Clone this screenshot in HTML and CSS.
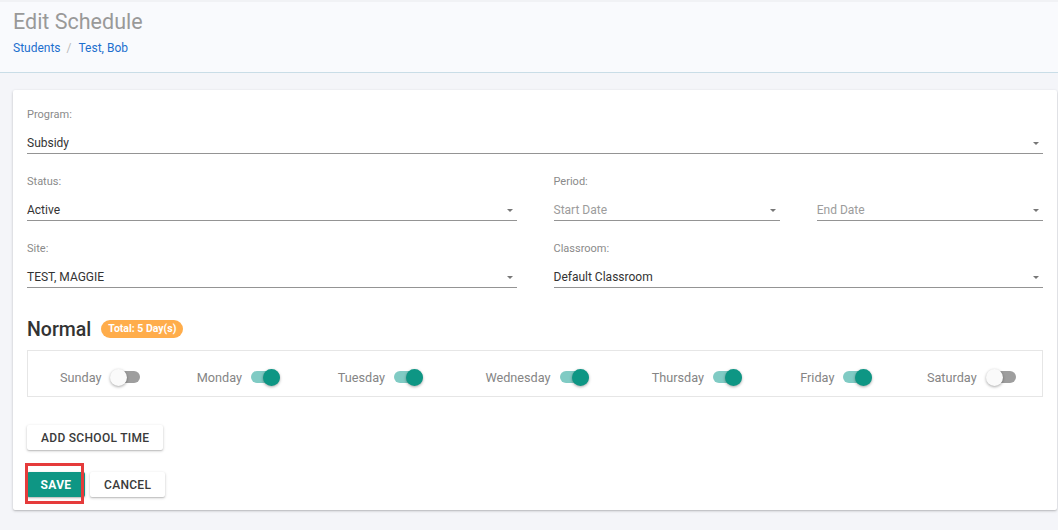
FILE: index.html
```html
<!DOCTYPE html>
<html>
<head>
<meta charset="utf-8">
<link rel="stylesheet" href="styles.css">
</head>
<body>
<header class="header">
  <h1 class="title">Edit Schedule</h1>
  <nav class="crumbs"><a class="crumb">Students</a><span class="sep">/</span><a class="crumb">Test, Bob</a></nav>
</header>
<main class="main">
  <section class="card">
    <div class="field">
      <div class="label">Program:</div>
      <div class="select"><span class="value">Subsidy</span><span class="caret"></span></div>
    </div>
    <div class="row">
      <div class="field">
        <div class="label">Status:</div>
        <div class="select"><span class="value">Active</span><span class="caret"></span></div>
      </div>
      <div class="field">
        <div class="label">Period:</div>
        <div class="row">
          <div class="select"><span class="value ph">Start Date</span><span class="caret"></span></div>
          <div class="select"><span class="value ph">End Date</span><span class="caret"></span></div>
        </div>
      </div>
    </div>
    <div class="row">
      <div class="field">
        <div class="label">Site:</div>
        <div class="select"><span class="value">TEST, MAGGIE</span><span class="caret"></span></div>
      </div>
      <div class="field">
        <div class="label">Classroom:</div>
        <div class="select"><span class="value">Default Classroom</span><span class="caret"></span></div>
      </div>
    </div>
    <div class="heading"><h2 class="h2">Normal</h2><span class="badge">Total: 5 Day(s)</span></div>
    <div class="days">
      <div class="day"><span class="dname">Sunday</span><span class="switch"><span class="track"></span><span class="thumb"></span></span></div>
      <div class="day"><span class="dname">Monday</span><span class="switch on"><span class="track"></span><span class="thumb"></span></span></div>
      <div class="day"><span class="dname">Tuesday</span><span class="switch on"><span class="track"></span><span class="thumb"></span></span></div>
      <div class="day"><span class="dname">Wednesday</span><span class="switch on"><span class="track"></span><span class="thumb"></span></span></div>
      <div class="day"><span class="dname">Thursday</span><span class="switch on"><span class="track"></span><span class="thumb"></span></span></div>
      <div class="day"><span class="dname">Friday</span><span class="switch on"><span class="track"></span><span class="thumb"></span></span></div>
      <div class="day"><span class="dname">Saturday</span><span class="switch"><span class="track"></span><span class="thumb"></span></span></div>
    </div>
    <div class="btnrow first"><button class="btn">Add School Time</button></div>
    <div class="btnrow actions">
      <span class="savewrap"><button class="btn primary">Save</button><span class="highlight"></span></span>
      <button class="btn">Cancel</button>
    </div>
  </section>
</main>
</body>
</html>
```
FILE: styles.css
```css
* { box-sizing: border-box; }
html, body { margin: 0; }
body {
  font-family: Roboto, "Liberation Sans", Arial, sans-serif;
  background: #f4f5f9;
  width: 1058px;
  height: 530px;
  overflow: hidden;
}
.header {
  background: #f9fafd;
  border-top: 2px solid #f1f2f5;
  border-bottom: 1px solid #c9dde7;
  height: 73px;
  padding: 7px 13px 0;
}
.title {
  margin: 0;
  font-size: 21.5px;
  font-weight: 400;
  color: #999;
  line-height: 26px;
}
.crumbs {
  margin-top: 5px;
  font-size: 12px;
  line-height: 16px;
  display: flex;
  align-items: center;
}
.crumb { color: #1d6fce; }
.sep { color: #bbb; margin: 0 7px 0 6px; }
.main { padding: 17px 1px 0 13px; }
.card {
  background: #fff;
  border-radius: 2px;
  box-shadow: 0 1px 3px rgba(0,0,0,0.2), 0 1px 1px rgba(0,0,0,0.08);
  padding: 17px 14px 13px;
  height: 420px;
}
.row {
  display: flex;
  gap: 37px;
}
.row > * { flex: 1; min-width: 0; }
.field { margin-bottom: 20px; }
.label {
  font-size: 11px;
  line-height: 16px;
  color: #8a8a8a;
  margin-bottom: 8px;
}
.select {
  height: 23px;
  border-bottom: 1px solid #949494;
  display: flex;
  align-items: center;
  justify-content: space-between;
  padding: 2px 4px 0 0;
}
.value {
  font-size: 12px;
  color: #333;
}
.value.ph { color: #9c9c9c; }
.caret {
  width: 0;
  height: 0;
  border-left: 3.5px solid transparent;
  border-right: 3.5px solid transparent;
  border-top: 3.5px solid #777;
}
.heading {
  display: flex;
  align-items: center;
  gap: 10px;
  margin-top: 9px;
  height: 24px;
}
.h2 {
  margin: 0;
  font-size: 19.5px;
  font-weight: 500;
  color: #333;
}
.badge {
  background: #ffad4b;
  color: #fff;
  font-size: 10.5px;
  font-weight: 700;
  height: 18px;
  line-height: 18px;
  padding: 0 7px;
  border-radius: 9px;
}
.days {
  margin-top: 9px;
  height: 47px;
  border: 1px solid #e6e6e6;
  display: grid;
  grid-template-columns: 139fr 139.5fr 145.5fr 169fr 152fr 128fr 142fr;
  justify-items: center;
  align-items: center;
  padding: 7px 0 0 3px;
}
.day {
  display: flex;
  align-items: center;
  gap: 9px;
}
.dname {
  font-size: 12.7px;
  color: #858585;
}
.switch {
  position: relative;
  width: 30px;
  height: 17px;
  display: inline-block;
}
.track {
  position: absolute;
  left: 1px;
  top: 2.5px;
  width: 29px;
  height: 12px;
  border-radius: 6px;
  background: #9e9e9e;
}
.thumb {
  position: absolute;
  left: 0;
  top: 0;
  width: 17px;
  height: 17px;
  border-radius: 50%;
  background: #fafafa;
  box-shadow: 0 1px 3px rgba(0,0,0,0.35);
}
.switch.on .track { left: 0; background: #80cbc4; }
.switch.on .thumb { left: 12px; background: #0e9684; }
.btnrow { display: flex; gap: 5px; }
.btnrow.first { margin-top: 28px; }
.btnrow.actions { margin-top: 22px; }
.btn {
  font-family: inherit;
  height: 25px;
  padding: 0 14px;
  border: 0;
  border-radius: 2px;
  background: #fff;
  color: #3a3a3a;
  font-size: 12px;
  font-weight: 500;
  letter-spacing: 0.3px;
  text-transform: uppercase;
  box-shadow: 0 1px 3px rgba(0,0,0,0.22), 0 1px 1px rgba(0,0,0,0.1);
}
.btn.primary {
  background: #0e9684;
  color: #fff;
  font-weight: 700;
  width: 58px;
  padding: 0;
}
.savewrap { position: relative; display: inline-block; }
.highlight {
  position: absolute;
  left: -2px;
  top: -9px;
  width: 59px;
  height: 41px;
  border: 3px solid #e53b3b;
  pointer-events: none;
}
```
